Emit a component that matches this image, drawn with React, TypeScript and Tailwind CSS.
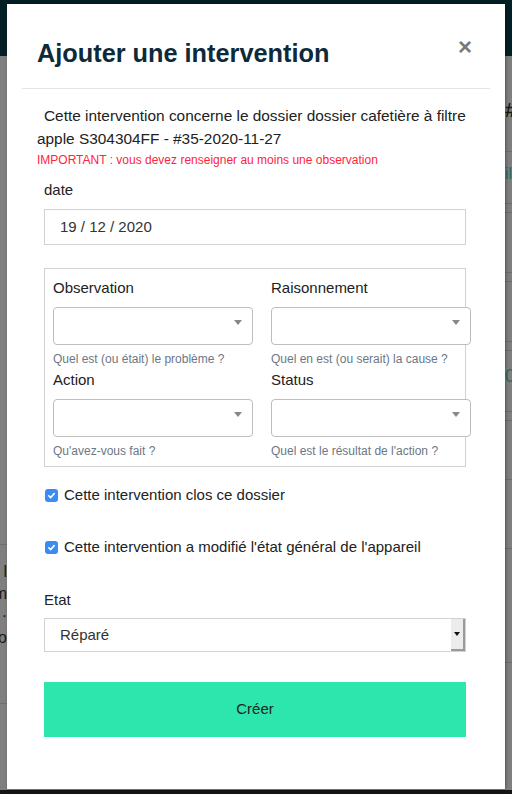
const font = { fontFamily: '"Liberation Sans", Arial, Helvetica, sans-serif' };

const rightRows: { h: number; text?: string; cls?: string }[] = [
	{ h: 96, text: "#", cls: "text-[20px] font-bold text-[#1a1a1a] pt-[44px]" },
	{ h: 52, text: "ilt", cls: "text-[16px] text-[#2a6b60] pt-[14px]" },
	{ h: 9 },
	{ h: 60 },
	{ h: 9 },
	{ h: 60 },
	{ h: 9 },
	{ h: 61, text: "0", cls: "text-[18px] text-[#2a6b60] pt-[16px]" },
	{ h: 9 },
	{ h: 59 },
	{ h: 69 },
	{ h: 114 },
];

const leftRows: { h: number; lines?: string[] }[] = [
	{ h: 489 },
	{ h: 159, lines: ["l", "m", "·", "o"] },
];

function Caret() {
	return (
		<svg width="8" height="5" viewBox="0 0 8 5" className="shrink-0">
			<path d="M0 0h8L4 5z" fill="#888" />
		</svg>
	);
}

function SelectField({ label, help }: { label: string; help: string }) {
	return (
		<div className="flex flex-col">
			<label className="text-[15px] leading-[20px] text-[#222] mb-[9px]">{label}</label>
			<div className="w-[200px] h-[38px] rounded-[4px] border border-[#bdbdbd] bg-white flex items-start justify-end pr-[10px] pt-[12px]">
				<Caret />
			</div>
			<p className="text-[12px] leading-[16px] text-[#6b7785] mt-[6px]">{help}</p>
		</div>
	);
}

function Check({ label }: { label: string }) {
	return (
		<label className="flex items-center gap-[6px] text-[15px] leading-[20px] text-[#222] pl-[1px]">
			<span className="w-[13px] h-[13px] rounded-[3px] bg-[#3a8cf5] flex items-center justify-center">
				<svg width="9" height="9" viewBox="0 0 9 9">
					<path d="M1.8 4.8l1.8 1.8 3.6-4" stroke="white" strokeWidth="1.6" fill="none" strokeLinecap="round" strokeLinejoin="round" />
				</svg>
			</span>
			{label}
		</label>
	);
}

export default function App() {
	return (
		<div className="relative w-[512px] h-[794px] overflow-hidden bg-[#7f7f7f]" style={font}>
			{/* page underneath the backdrop */}
			<div className="h-[56px] bg-[#031f26]" />
			<div className="flex justify-between h-[734px]">
				<div className="w-[7px] flex flex-col">
					{leftRows.map((r, i) => (
						<div key={i} style={{ height: r.h }} className="border-b border-[#6e6e6e] flex flex-col items-end pt-[16px] text-[16px] leading-[22px] text-[#1a1a1a]">
							{r.lines?.map((l, j) => (
								<span key={j} className="whitespace-nowrap">{l}</span>
							))}
						</div>
					))}
				</div>
				<div className="w-[7px] overflow-hidden flex flex-col">
					{rightRows.map((r, i) => (
						<div key={i} style={{ height: r.h }} className={`border-b border-[#6e6e6e] whitespace-nowrap leading-none ${r.cls ?? ""}`}>
							{r.text}
						</div>
					))}
				</div>
			</div>
			<div className="h-[4px] bg-[#141414]" />

			{/* modal */}
			<div className="absolute left-[7px] top-[4px] w-[498px] h-[785px] bg-white shadow-[1px_0_3px_rgba(0,0,0,0.35)]">
				<div className="flex items-start justify-between pl-[30px] pr-[33px] h-[84px]">
					<h2 className="pt-[34px] text-[25.3px] leading-[30px] font-bold text-[#0c2a3a]">Ajouter une intervention</h2>
					<button className="mt-[31px] text-[24px] leading-[24px] font-bold text-[#7a7a7a]">×</button>
				</div>
				<div className="mx-[15px] border-t border-[#e3e3e3]" />

				<div className="pl-[30px] pr-[32px] pt-[15px]">
					<p className="text-[15.4px] leading-[23px] text-[#222] indent-[7px]">
						Cette intervention concerne le dossier dossier cafetière à filtre apple S304304FF - #35-2020-11-27
					</p>
					<p className="text-[12px] leading-[17px] text-[#ff2340] mt-[2px]">
						IMPORTANT : vous devez renseigner au moins une observation
					</p>

					<div className="px-[7px]">
						<div className="mt-[11px] text-[15px] leading-[20px] text-[#222]">date</div>
						<div className="mt-[9px] h-[36px] border border-[#cfd2d6] flex items-center pl-[15px] text-[15px] text-[#333]">
							19 / 12 / 2020
						</div>

						<div className="mt-[23px] border border-[#d2d2d2] pl-[8px] pt-[9px] pb-[7px]">
							<div className="grid grid-cols-[218px_200px]">
								<SelectField label="Observation" help="Quel est (ou était) le problème ?" />
								<SelectField label="Raisonnement" help="Quel en est (ou serait) la cause ?" />
							</div>
							<div className="grid grid-cols-[218px_200px] mt-[3px]">
								<SelectField label="Action" help="Qu'avez-vous fait ?" />
								<SelectField label="Status" help="Quel est le résultat de l'action ?" />
							</div>
						</div>

						<div className="mt-[18px]">
							<Check label="Cette intervention clos ce dossier" />
						</div>
						<div className="mt-[32px]">
							<Check label="Cette intervention a modifié l'état général de l'appareil" />
						</div>

						<div className="mt-[33px] text-[15px] leading-[20px] text-[#222]">Etat</div>
						<div className="mt-[8px] h-[34px] border border-[#cfd2d6] flex items-stretch">
							<span className="flex-1 flex items-center pl-[15px] text-[15px] text-[#333]">Réparé</span>
							<span className="w-[14px] bg-[#ececec] border-r-2 border-b-2 border-[#9a9a9a] flex items-center justify-center">
								<svg width="6" height="4" viewBox="0 0 6 4">
									<path d="M0 0h6L3 4z" fill="#111" />
								</svg>
							</span>
						</div>

						<button className="mt-[30px] w-full h-[55px] bg-[#2de6ad] text-[15px] text-[#222]">Créer</button>
					</div>
				</div>
			</div>
		</div>
	);
}
